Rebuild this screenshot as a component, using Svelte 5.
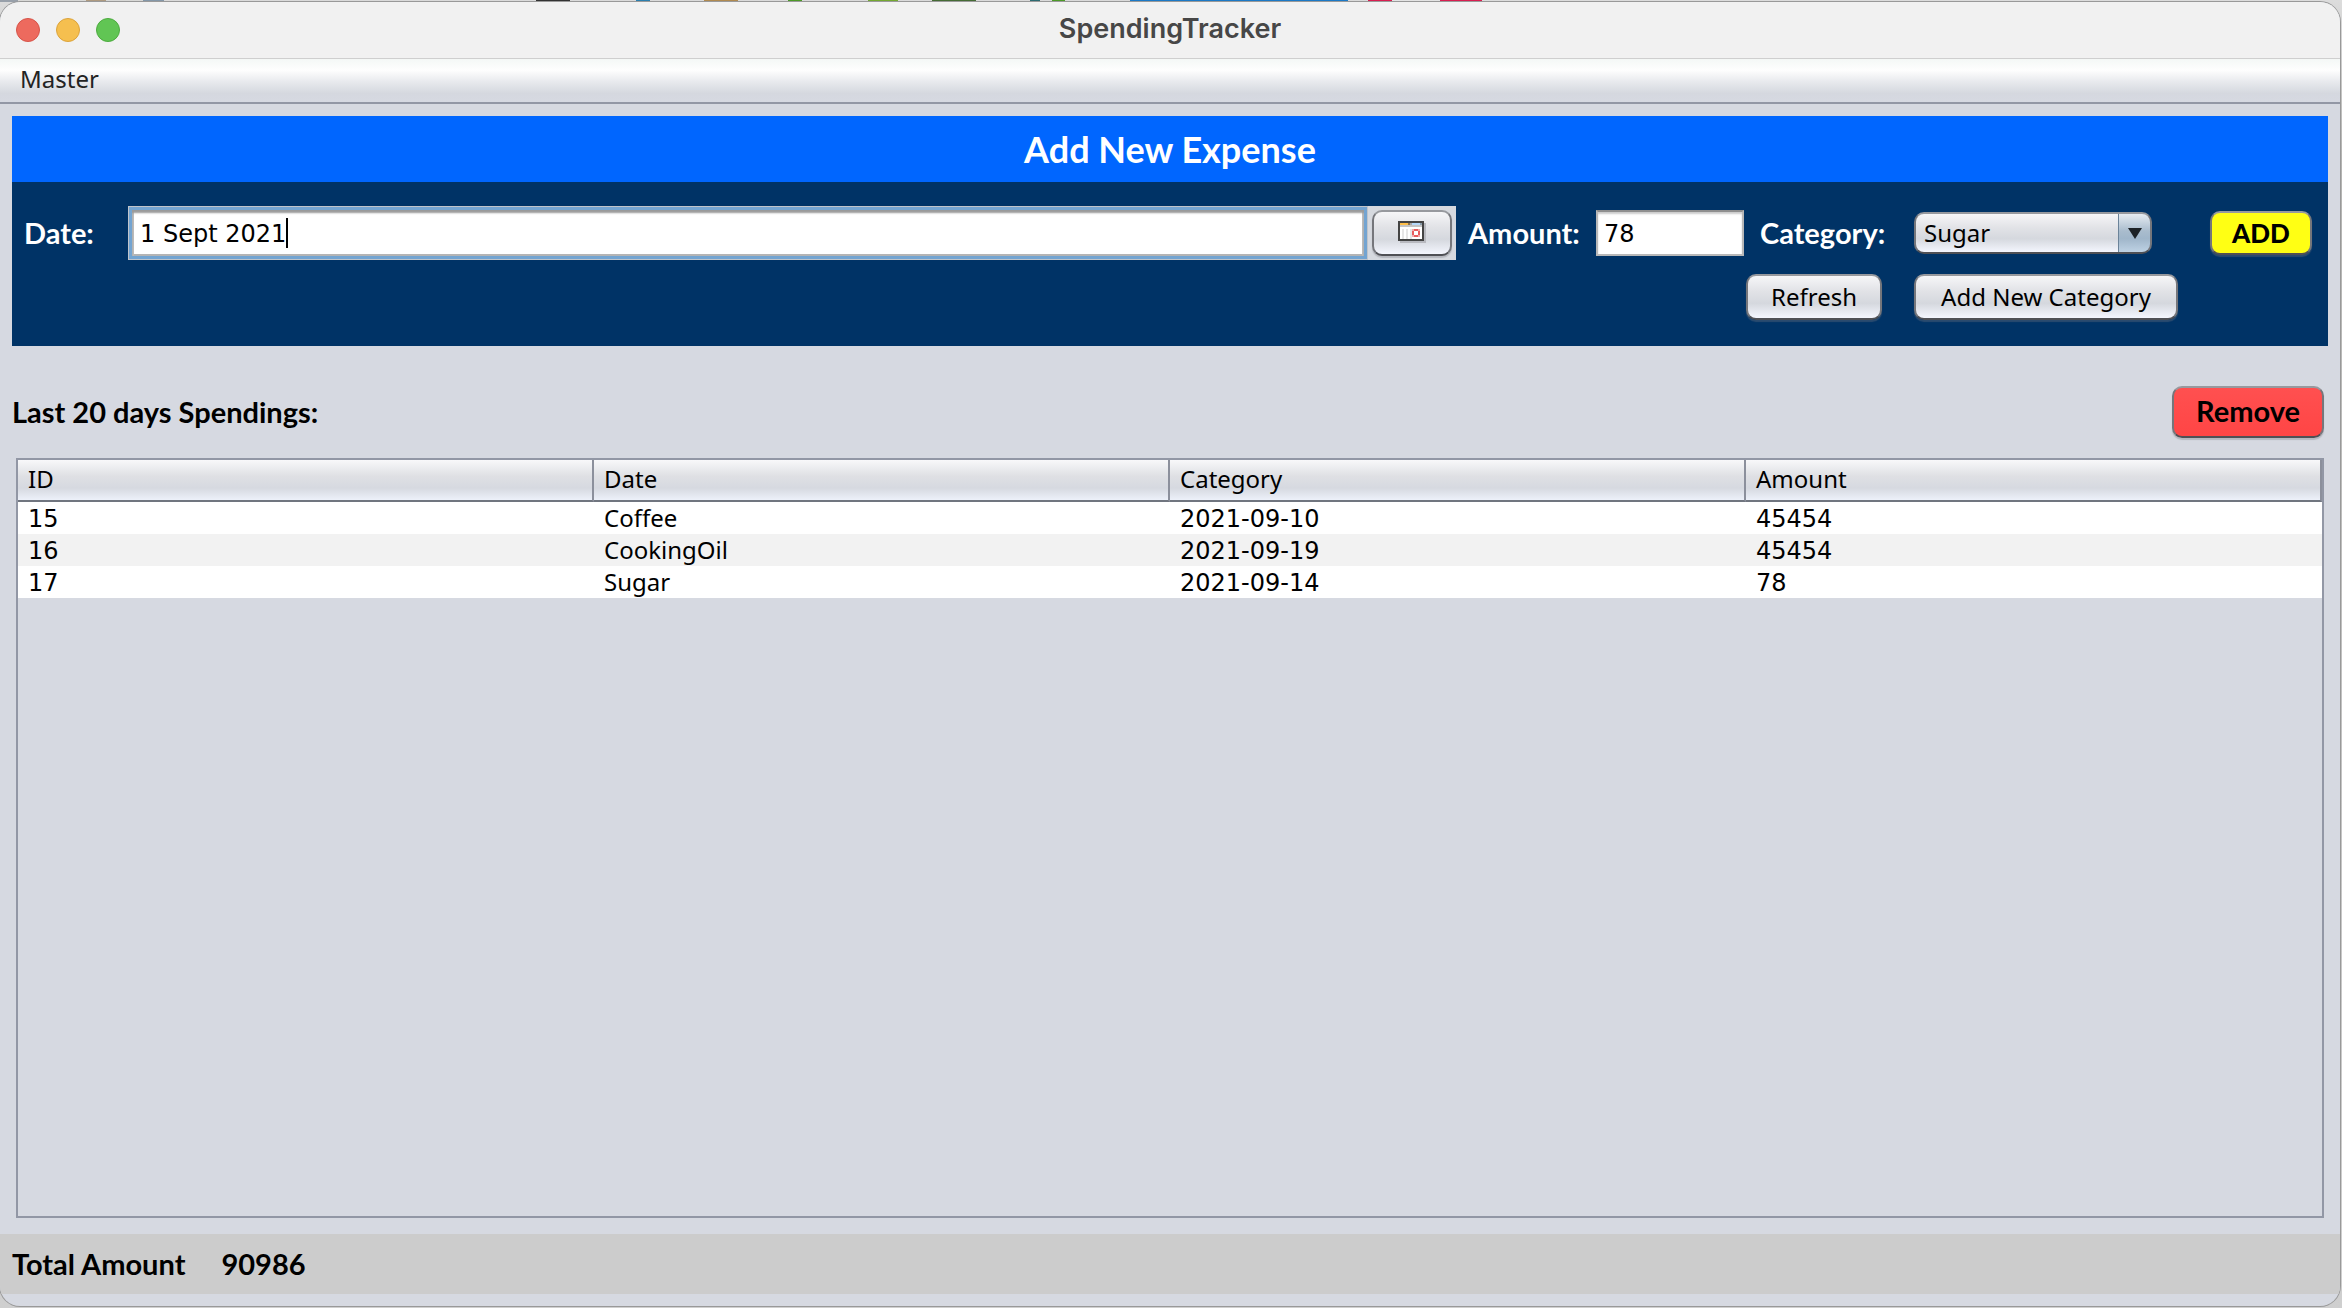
<script>
  let date = $state('1 Sept 2021');
  let amount = $state('78');
  let category = $state('Sugar');
  const categories = ['Sugar', 'Coffee', 'CookingOil'];
  const columns = ['ID', 'Date', 'Category', 'Amount'];
  const rows = [
    ['15', 'Coffee', '2021-09-10', '45454'],
    ['16', 'CookingOil', '2021-09-19', '45454'],
    ['17', 'Sugar', '2021-09-14', '78']
  ];
  const numeric = /^[\d-]+$/;
</script>

<div class="desktop">
  <div class="strip"></div>
  <div class="window">
    <header class="titlebar">
      <div class="lights">
        <button class="light close" aria-label="Close"></button>
        <button class="light minimise" aria-label="Minimise"></button>
        <button class="light zoom" aria-label="Zoom"></button>
      </div>
      <div class="title">SpendingTracker</div>
    </header>

    <nav class="menubar">
      <button class="menu">Master</button>
    </nav>

    <main>
      <section class="expense">
        <h1>Add New Expense</h1>
        <form onsubmit={(e) => e.preventDefault()}>
          <label class="caption" for="date">Date:</label>
          <div class="picker">
            <div class="datefield">
              <input id="date" type="text" bind:value={date} />
              <span class="caret"></span>
            </div>
            <button type="button" class="btn calendar" aria-label="Choose date">
              <svg width="28" height="22" viewBox="0 0 28 22" shape-rendering="crispEdges">
                <path d="M2 2h26v20H2z" fill="#b9bac0" />
                <path d="M0 0h26v20H0z" fill="#444" />
                <path d="M2 2h22v16H2z" fill="#fff" />
                <path d="M2 2h8v2H2z" fill="#ffbf4a" />
                <path d="M10 2h2v2h-2z" fill="#93764a" />
                <path d="M12 2h2v2h-2z" fill="#aaa" />
                <path d="M14 2h8v2h-8z" fill="#b5d8fa" />
                <path d="M22 2h2v2h-2z" fill="#8a9caa" />
                <path d="M2 4h22v2H2z" fill="#c4c4c4" />
                <path d="M4 8h2v10H4zM8 8h2v10H8zM12 8h2v10h-2z" fill="#e6e6e6" />
                <path d="M16 8h4v2h-4zM14 10h2v4h-2zM20 10h2v4h-2zM16 14h4v2h-4z" fill="#e85c5c" />
                <path d="M14 8h2v2h-2zM20 8h2v2h-2zM14 14h2v2h-2zM20 14h2v2h-2z" fill="#f3a9a9" />
              </svg>
            </button>
          </div>
          <label class="caption amount-label" for="amount">Amount:</label>
          <input id="amount" class="amount" type="text" bind:value={amount} />
          <label class="caption category-label" for="category">Category:</label>
          <div class="combo">
            <select id="category" bind:value={category}>
              {#each categories as name}
                <option>{name}</option>
              {/each}
            </select>
            <svg class="arrow" width="14" height="11" viewBox="0 0 14 11"><path d="M0 0h14L7 11z" fill="#1d2226" /></svg>
          </div>
          <button class="btn add">ADD</button>
          <button type="button" class="btn refresh">Refresh</button>
          <button type="button" class="btn new-category">Add New Category</button>
        </form>
      </section>

      <div class="list-head">
        <h2>Last 20 days Spendings:</h2>
        <button class="btn remove">Remove</button>
      </div>

      <div class="list">
        <table>
          <thead>
            <tr>
              {#each columns as name}
                <th scope="col">{name}</th>
              {/each}
            </tr>
          </thead>
          <tbody>
            {#each rows as row}
              <tr>
                {#each row as cell}
                  <td class:numeric={numeric.test(cell)}>{cell}</td>
                {/each}
              </tr>
            {/each}
          </tbody>
        </table>
      </div>
    </main>

    <footer>
      <span>Total Amount</span>
      <output>90986</output>
    </footer>
  </div>
</div>

<style>
  :global(body) {
    margin: 0;
  }

  * {
    box-sizing: border-box;
  }

  .desktop {
    min-height: 100vh;
    display: flex;
    flex-direction: column;
    padding: 0 2px 2px 0;
    background: linear-gradient(#dcdcdc, #b4b4b2 12%, #c4c4c4 60%, #cfcfcf);
    font-family: 'Noto Sans', 'Open Sans', sans-serif;
    font-size: 24px;
    color: #000;
  }

  .strip {
    height: 2px;
    margin-right: -2px;
    background: linear-gradient(
      90deg,
      #98a0aa 0 18px, #d8d8d6 18px 86px, #ae9a80 86px 106px, #d8d8d6 106px 143px,
      #8497a8 143px 164px, #dadada 164px 536px, #333 536px 570px, #dadada 570px 636px,
      #2c7fae 636px 650px, #dadada 650px 704px, #b08a50 704px 738px, #dadada 738px 788px,
      #4d9a28 788px 802px, #dadada 802px 868px, #74a832 868px 898px, #dadada 898px 932px,
      #456b35 932px 976px, #dadada 976px 1030px, #2d6b72 1030px 1040px, #dadada 1040px 1052px,
      #4d9a28 1052px 1065px, #dadada 1065px 1130px, #1c79c6 1130px 1348px, #dadada 1348px 1368px,
      #d81e50 1368px 1392px, #e4e4e4 1392px 1440px, #d81e50 1440px 1482px, #dcdcdc 1482px
    );
  }

  .window {
    flex: 1;
    display: flex;
    flex-direction: column;
    overflow: hidden;
    border-radius: 20px;
    background: #d6d9e1;
    box-shadow: 0 0 0 1px #999;
    padding-bottom: 12px;
  }

  .titlebar {
    height: 57px;
    display: grid;
    grid-template-columns: 1fr auto 1fr;
    align-items: center;
    padding: 0 16px;
    background: #f1f1f1;
    border-bottom: 1px solid #cfcfcf;
  }

  .lights {
    display: flex;
    gap: 16px;
  }

  .light {
    width: 24px;
    height: 24px;
    padding: 0;
    border: 1px solid;
    border-radius: 50%;
  }

  .close {
    background: #ed6a5e;
    border-color: #d65449;
  }

  .minimise {
    background: #f5bf4f;
    border-color: #dba33c;
  }

  .zoom {
    background: #61c554;
    border-color: #4dab3f;
  }

  .title {
    padding-bottom: 2px;
    font: 600 27px/32px Inter, 'Liberation Sans', sans-serif;
    color: #474747;
  }

  .menubar {
    height: 45px;
    display: flex;
    align-items: flex-start;
    background: linear-gradient(#f4f8f6, #fefefe 26%, #e6e8ec 55%, #d5d8df 80%, #d6d9e2);
    border-bottom: 2px solid #9297a5;
  }

  .menu {
    padding: 0 20px;
    border: 0;
    background: none;
    font: inherit;
    line-height: 40px;
    color: #232323;
  }

  main {
    flex: 1;
    display: flex;
    flex-direction: column;
    padding: 12px 12px 16px;
  }

  h1,
  h2 {
    margin: 0;
    font-family: Lato, sans-serif;
    font-weight: 700;
  }

  h1 {
    background: #0066ff;
    color: #fff;
    font-size: 36px;
    line-height: 66px;
    text-align: center;
  }

  h2 {
    font-size: 29px;
    line-height: 52px;
  }

  form {
    display: grid;
    grid-template-columns: 104px minmax(0, 1fr) 138px 148px 170px 264px 134px;
    grid-template-rows: 54px 46px;
    row-gap: 14px;
    align-items: center;
    padding: 24px 16px 26px 12px;
    background: #003366;
  }

  .caption {
    font: 700 29px/52px Lato, sans-serif;
    color: #fff;
  }

  .amount-label {
    padding-left: 10px;
  }

  .category-label {
    padding-left: 16px;
  }

  .picker {
    display: flex;
    height: 54px;
    margin-right: 2px;
    padding: 1px 4px 1px 1px;
    gap: 5px;
    background: #d6d9df;
  }

  .datefield {
    flex: 1;
    min-width: 0;
    display: flex;
    align-items: center;
    padding-left: 8px;
    border: 3px solid #73a4d1;
    outline: 1px solid #c0c4ca;
    background: #fff;
    box-shadow: inset 0 3px 2px #9a9a9a, inset 2px 0 #bcbcbc, inset -2px 0 #bcbcbc, inset 0 -2px #b4b4b4;
  }

  .datefield input {
    field-sizing: content;
    padding: 2px 0 0;
    border: 0;
    outline: 0;
    background: none;
    font: 24px/32px 'DejaVu Sans', sans-serif;
  }

  .caret {
    width: 2px;
    height: 30px;
    background: #000;
  }

  .btn {
    height: 46px;
    padding: 0 0 2px;
    border: 2px solid #6b6c70;
    border-color: #97999e #75767b #4f5055;
    border-radius: 10px;
    background: linear-gradient(#f6f6f8, #e2e3e7 35%, #d5d8de 65%, #f4f6fe);
    box-shadow: 0 2px 1px rgb(120 120 130 / 35%);
    font: inherit;
    color: #000;
  }

  .calendar {
    width: 80px;
    margin-top: 3px;
    display: grid;
    place-items: center;
  }

  .amount {
    width: 100%;
    height: 46px;
    padding: 2px 6px 0;
    border: 2px solid #b8b8b8;
    border-top-color: #8f8f8f;
    outline: 0;
    background: #fff;
    box-shadow: inset 0 2px 2px #ccc;
    font: 24px/32px 'DejaVu Sans', sans-serif;
  }

  .combo {
    position: relative;
    width: 238px;
  }

  select {
    appearance: none;
    display: block;
    width: 100%;
    height: 42px;
    padding: 0 40px 0 8px;
    border: 2px solid #6b6c70;
    border-color: #97999e #75767b #4f5055;
    border-radius: 10px;
    background:
      linear-gradient(#6b8399, #6b8399) right 31px top / 1px 100% no-repeat,
      linear-gradient(#e6ecf2, #a9bccd 45%, #a0b6ca 65%, #bed2e4) right / 32px 100% no-repeat,
      linear-gradient(#f6f6f8, #e2e3e7 35%, #d5d8de 65%, #f4f6fe);
    font: inherit;
    line-height: 36px;
    color: #000;
  }

  .arrow {
    position: absolute;
    right: 10px;
    top: 16px;
    pointer-events: none;
  }

  .add,
  .remove {
    font: 900 26px/40px Lato, sans-serif;
  }

  .add {
    justify-self: end;
    width: 102px;
    height: 44px;
    background: #ffff14;
  }

  .refresh {
    grid-column: 5;
    justify-self: end;
    width: 136px;
    margin-right: 32px;
  }

  .new-category {
    width: 264px;
  }

  .list-head {
    display: flex;
    justify-content: space-between;
    padding: 40px 4px 20px 0;
  }

  .remove {
    width: 152px;
    height: 52px;
    background: linear-gradient(#ff5050, #ff4545);
    font-size: 29px;
    font-weight: 700;
  }

  .list {
    flex: 1;
    margin: 0 4px;
    border: 2px solid #9297a5;
  }

  table {
    width: 100%;
    table-layout: fixed;
    border-collapse: separate;
    border-spacing: 0;
  }

  th,
  td {
    padding: 0 10px;
    text-align: left;
    font-weight: 400;
  }

  th {
    height: 42px;
    padding-bottom: 2px;
    line-height: 38px;
    border-right: 2px solid #8c909c;
    border-bottom: 2px solid #70757f;
    background: linear-gradient(#f8f8fa, #dfe0e4 40%, #d6d9e0 70%, #edf1fa);
  }

  td {
    height: 32px;
    padding-top: 2px;
    line-height: 28px;
    vertical-align: baseline;
  }

  tbody tr {
    background: #fff;
  }

  tbody tr:nth-child(even) {
    background: #f2f2f2;
  }

  .numeric {
    font-family: 'DejaVu Sans', sans-serif;
  }

  footer {
    display: flex;
    gap: 36px;
    height: 60px;
    padding: 0 12px;
    background: #ccc;
    font: 700 29px/60px Lato, sans-serif;
  }
</style>
